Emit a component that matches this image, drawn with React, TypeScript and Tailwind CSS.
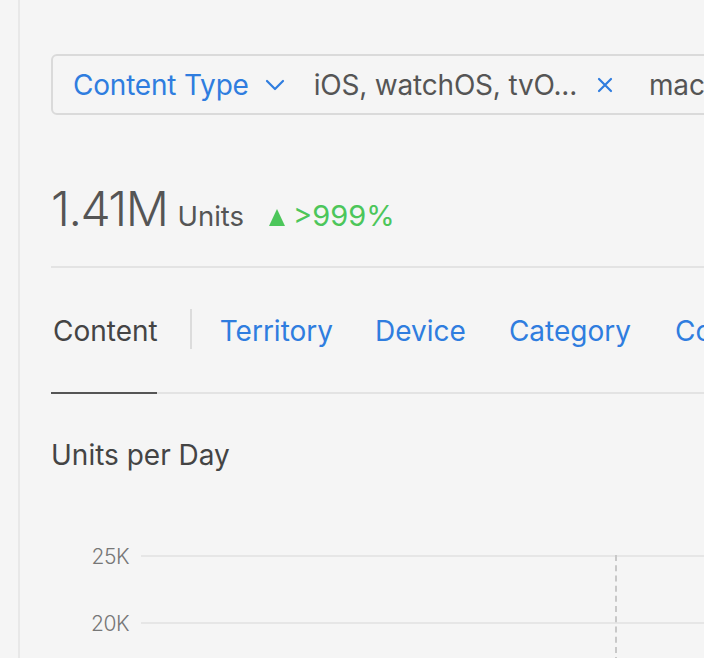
import React from "react";

const font = { fontFamily: "Inter, 'Noto Sans', sans-serif" };

export default function App() {
  return (
    <div className="w-[704px] h-[658px] bg-[#f5f5f5] overflow-hidden flex" style={font}>
      <div className="w-[20px] shrink-0 border-r-2 border-[#e8e8e8]" />
      <div className="flex-1 min-w-0 pl-[31px] pt-[54px]">
        {/* Filter bar */}
        <div className="w-[760px] h-[61px] border-2 border-[#dadada] rounded-[6px] flex items-center pl-[20px] whitespace-nowrap">
          <span className="text-[28px] text-[#2f7ddf] tracking-[-0.2px]">Content Type</span>
          <svg className="ml-[16px]" width="20" height="12" viewBox="0 0 20 12" fill="none">
            <path d="M2 2 L10 10 L18 2" stroke="#2f7ddf" strokeWidth="2.2" strokeLinecap="round" strokeLinejoin="round" />
          </svg>
          <span className="ml-[29px] text-[28px] text-[#555] tracking-[-0.2px]">iOS, watchOS, tvO...</span>
          <svg className="ml-[20px]" width="16" height="16" viewBox="0 0 16 16" fill="none">
            <path d="M2 2 L14 14 M14 2 L2 14" stroke="#2f7ddf" strokeWidth="2.2" strokeLinecap="round" />
          </svg>
          <span className="ml-[36px] text-[28px] text-[#555] tracking-[-0.2px]">macOS</span>
        </div>

        {/* Metric */}
        <div className="mt-[70px] flex items-baseline whitespace-nowrap h-[52px]">
          <span className="text-[48px] font-light text-[#555] tracking-[-1.5px] leading-none">1.41M</span>
          <span className="ml-[10px] text-[27.5px] text-[#555] leading-none">Units</span>
          <span className="ml-[25px] self-center mt-[12px] w-0 h-0 border-l-[8px] border-r-[8px] border-b-[17px] border-l-transparent border-r-transparent border-b-[#4cc65a]" />
          <span className="ml-[8px] text-[29px] text-[#4cc65a] leading-none">&gt;999%</span>
        </div>
        <div className="mt-[29px] h-[2px] bg-[#e3e3e3]" />

        {/* Tabs */}
        <div className="relative mt-[41px] h-[85px] whitespace-nowrap">
          <div className="flex items-start">
            <span className="ml-[2px] mt-[3px] text-[28px] text-[#444] leading-[38px]">Content</span>
            <div className="ml-[32px] h-[40px] w-0 border-l-2 border-[#dcdcdc]" />
            <span className="ml-[28px] mt-[3px] text-[28px] text-[#2f7ddf] leading-[38px]">Territory</span>
            <span className="ml-[42px] mt-[3px] text-[28px] text-[#2f7ddf] leading-[38px]">Device</span>
            <span className="ml-[43px] mt-[3px] text-[28px] text-[#2f7ddf] leading-[38px]">Category</span>
            <span className="ml-[44px] mt-[3px] text-[28px] text-[#2f7ddf] leading-[38px]">Content Ratings</span>
          </div>
          <div className="absolute left-0 right-0 bottom-0 h-[2px] bg-[#e3e3e3]" />
          <div className="absolute left-0 bottom-0 w-[106px] h-[2px] bg-[#555]" />
        </div>

        {/* Chart title */}
        <div className="mt-[42px] text-[28px] text-[#444] leading-[38px] whitespace-nowrap">Units per Day</div>

        {/* Chart */}
        <div className="relative mt-[72px]">
          <div className="flex items-center h-[20px]">
            <span className="w-[78px] text-right text-[21px] font-light text-[#777] leading-none tracking-[-0.5px]">25K</span>
            <div className="ml-[12px] flex-1 h-[2px] bg-[#e6e6e6]" />
          </div>
          <div className="flex items-center h-[20px] mt-[47px]">
            <span className="w-[78px] text-right text-[21px] font-light text-[#777] leading-none tracking-[-0.5px]">20K</span>
            <div className="ml-[12px] flex-1 h-[2px] bg-[#e6e6e6]" />
          </div>
          <div className="absolute left-[564px] top-[9px] h-[200px] border-l-2 border-dashed border-[#c8c8c8]" />
        </div>
      </div>
    </div>
  );
}
